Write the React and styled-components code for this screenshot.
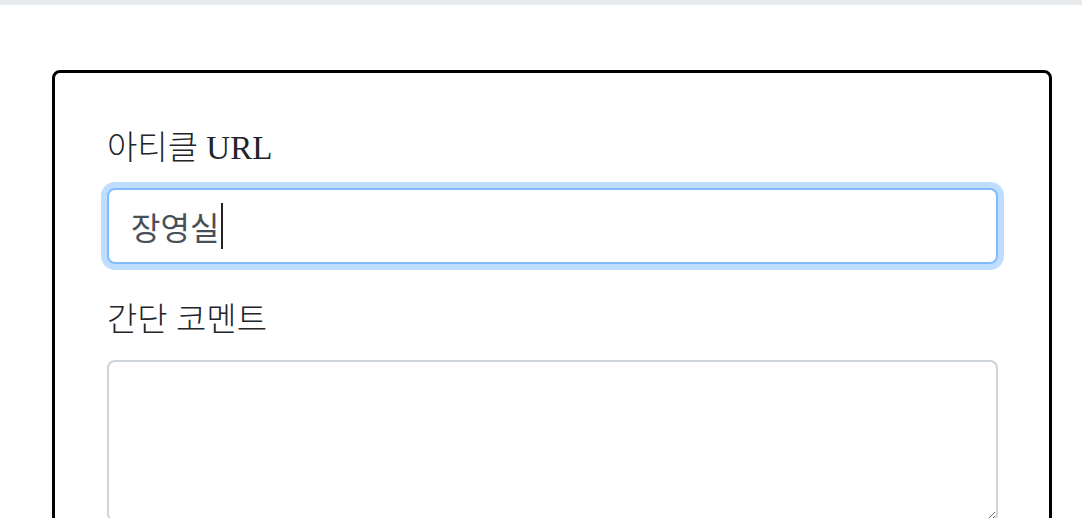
import React from "react";
import styled, { createGlobalStyle } from "styled-components";

const Global = createGlobalStyle`
  html, body { margin: 0; padding: 0; background: #fff; }
  body { font-family: "Liberation Serif", "Noto Sans CJK KR", serif; color: #212529; overflow: hidden; }
  * { box-sizing: border-box; }
`;

const TopBar = styled.div`
  height: 5px;
  background: #e7eaed;
`;

const Page = styled.main`
  padding: 65px 30px 0 52px;
`;

const Card = styled.form`
  width: 1000px;
  border: 3px solid #000;
  border-radius: 8px;
  padding: 51px 51px 0 52px;
  height: 520px;
`;

const Group = styled.div`
  margin-bottom: 32px;
`;

const Label = styled.label`
  display: block;
  font-family: "Liberation Serif", "Noto Sans CJK KR", serif;
  font-weight: 300;
  font-size: 33px;
  line-height: 48px;
  margin-bottom: 16px;
  color: #212529;
`;

const FakeInput = styled.div`
  display: flex;
  align-items: center;
  height: 76px;
  padding: 0 22px;
  font-family: "Noto Sans CJK KR", "Noto Sans", sans-serif;
  font-size: 32px;
  color: #495057;
  border: 2px solid ${(p) => (p.$focused ? "#80bdff" : "#ced4da")};
  border-radius: 8px;
  box-shadow: ${(p) => (p.$focused ? "0 0 0 6px rgba(0,123,255,0.25)" : "none")};
  background: #fff;
`;

const Caret = styled.span`
  display: inline-block;
  width: 2px;
  height: 46px;
  background: #222;
  margin-left: 2px;
`;

const TextArea = styled.textarea`
  display: block;
  width: 100%;
  height: 162px;
  border: 2px solid #ced4da;
  border-radius: 8px;
  padding: 12px 24px;
  font-family: "Noto Sans CJK KR", "Noto Sans", sans-serif;
  font-size: 32px;
  color: #495057;
  outline: none;
`;

export default function App() {
  return (
    <>
      <Global />
      <TopBar />
      <Page>
        <Card onSubmit={(e) => e.preventDefault()}>
          <Group>
            <Label>아티클 URL</Label>
            <FakeInput $focused role="textbox">
              장영실<Caret />
            </FakeInput>
          </Group>
          <Group>
            <Label>간단 코멘트</Label>
            <TextArea />
          </Group>
        </Card>
      </Page>
    </>
  );
}
